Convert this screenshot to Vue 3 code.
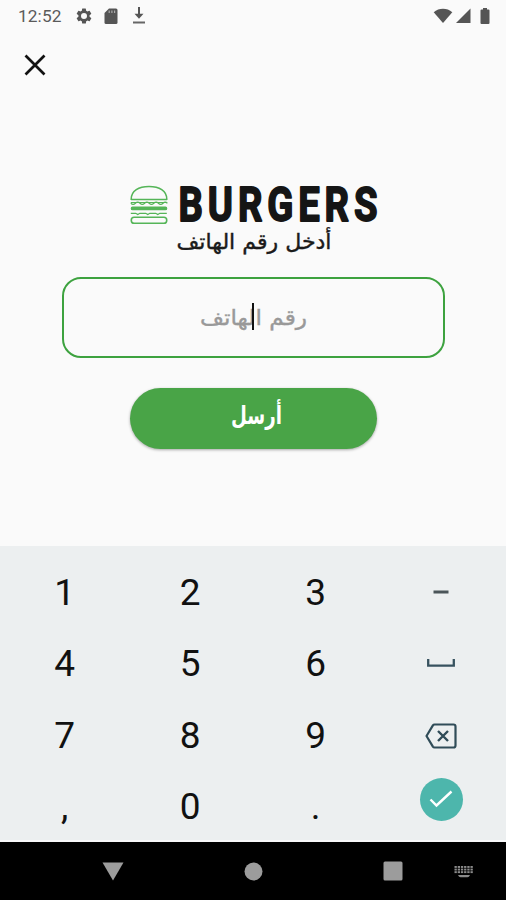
<script setup>
const keys = ['1', '2', '3', 'dash', '4', '5', '6', 'space', '7', '8', '9', 'delete', ',', '0', '.', 'done']
const named = ['dash', 'space', 'delete', 'done']
const keyboardCols = [0, 3.2, 6.4, 9.6, 12.8, 16]
</script>

<template>
  <div class="screen">
    <header class="status">
      <span class="clock">12:52</span>
      <svg class="gear" width="18" height="18" viewBox="0 0 24 24"><path fill="#555" fill-rule="evenodd" d="M19.4 13c.04-.3.06-.65.06-1s-.02-.7-.07-1l2.1-1.65a.5.5 0 0 0 .12-.64l-2-3.46a.5.5 0 0 0-.6-.22l-2.5 1a7.4 7.4 0 0 0-1.69-.98l-.38-2.65A.5.5 0 0 0 14 2h-4a.5.5 0 0 0-.5.42l-.37 2.65c-.61.25-1.17.58-1.69.98l-2.49-1a.5.5 0 0 0-.61.22l-2 3.46a.5.5 0 0 0 .12.64L4.58 11a8 8 0 0 0 0 2l-2.11 1.65a.5.5 0 0 0-.12.64l2 3.46c.12.22.39.3.61.22l2.49-1c.52.4 1.08.73 1.69.98l.37 2.65c.04.24.25.42.5.42h4c.25 0 .46-.18.49-.42l.38-2.65a7.4 7.4 0 0 0 1.69-.98l2.49 1c.23.09.49 0 .61-.22l2-3.46a.5.5 0 0 0-.12-.64zM12 16a4 4 0 1 1 0-8a4 4 0 0 1 0 8z"/></svg>
      <svg class="card" width="14" height="17" viewBox="0 0 14 17"><path fill="#555" d="M5 .5h7a1.500 1.500 0 0 1 1.500 1.500v12.500a1.500 1.500 0 0 1-1.500 1.500H2a1.500 1.500 0 0 1-1.500-1.500V5z"/><path d="M5.200 2.500v2.500M7.900 2.500v2.500M10.600 2.500v2.500" stroke="#aaa" stroke-width="1.200"/></svg>
      <svg class="download" width="14" height="18" viewBox="0 0 14 18"><path d="M7 0v10" fill="none" stroke="#555" stroke-width="2"/><path d="M1 15.500h12" stroke="#666" stroke-width="2"/><path d="M2.500 6.800h9L7 11.800z" fill="#555"/></svg>
      <div class="signals">
        <svg width="20" height="16" viewBox="0 0 20 16"><path fill="#555" d="M.7 4.200C6-.3 14-.3 19.300 4.200L10 15z"/></svg>
        <svg width="15" height="16" viewBox="0 0 15 16"><path fill="#555" d="M14.500.5V15H0z"/></svg>
        <svg class="battery" width="10" height="16" viewBox="0 0 10 16"><path fill="#555" d="M3 0h4v1.600h1.500q1 0 1 1V15q0 1-1 1h-7q-1 0-1-1V2.600q0-1 1-1H3z"/></svg>
      </div>
    </header>

    <div class="toolbar">
      <svg width="22" height="22" viewBox="0 0 22 22"><path d="M1.500 1.500l19 19M20.500 1.500l-19 19" stroke="#111" stroke-width="2.700"/></svg>
    </div>

    <main class="form">
      <div class="brand">
        <svg class="burger" width="38" height="40" viewBox="0 0 38 40" fill="none" stroke="#55b558">
          <path d="M1.200 14.500C1 5.500 9 1.500 19 1.500s18 4 17.800 13z" stroke-width="1.600" stroke-linejoin="round"/>
          <path d="M.8 17.500h36.400" stroke-width="1"/>
          <path d="M.8 18.300q2.300 2.200 4.600 0t4.600 0 4.600 0 4.600 0 4.600 0 4.600 0 4.600 0 4.300 0" stroke-width="1.200"/>
          <rect x="1.500" y="22.300" width="35" height="2.200" rx="1.100" stroke-width="1.600" fill="#55b558"/>
          <path d="M.8 28.300h5l2 1.300 2-1.300h6l2 1.300 2-1.300h6l2 1.300 2-1.300h7" stroke-width="1.200"/>
          <rect x="1.300" y="32.200" width="35.400" height="6" rx="2.800" stroke-width="1.600"/>
        </svg>
        <svg class="wordmark" width="204" height="44" viewBox="0 0 204 44"><text class="name" transform="translate(1.600 38.200) scale(.78 1)" textLength="255" lengthAdjust="spacing">BURGERS</text></svg>
      </div>
      <svg class="subtitle" width="160" height="32" viewBox="0 0 160 32"><text class="arabic" x="81" y="21.500" text-anchor="middle" textLength="155" lengthAdjust="spacingAndGlyphs" font-size="21.500" fill="#1b1b1b" stroke="#1b1b1b" stroke-width=".4">أدخل رقم الهاتف</text></svg>
      <div class="field">
        <svg width="120" height="40" viewBox="0 0 120 40"><text class="arabic" x="59.500" y="27" text-anchor="middle" textLength="107" lengthAdjust="spacingAndGlyphs" font-size="21.500" fill="#999" stroke="#999" stroke-width=".4">رقم الهاتف</text></svg>
        <i class="caret"></i>
      </div>
      <button class="send">
        <svg width="60" height="44" viewBox="0 0 60 44"><text class="arabic bold" x="30.500" y="27" text-anchor="middle" textLength="51" lengthAdjust="spacingAndGlyphs" font-size="25" fill="#fff">أرسل</text></svg>
      </button>
    </main>

    <section class="keypad">
      <div v-for="key in keys" :key="key" class="key">
        <span v-if="!named.includes(key)">{{ key }}</span>
        <svg v-else-if="key === 'dash'" class="dash" width="16" height="4" viewBox="0 0 16 4"><path d="M.5 2h15" stroke="#4b5559" stroke-width="3"/></svg>
        <svg v-else-if="key === 'space'" class="space" width="28" height="8" viewBox="0 0 28 8"><path d="M1.200 0v6.600h25.600V0" fill="none" stroke="#37525f" stroke-width="2.300"/></svg>
        <svg v-else-if="key === 'delete'" width="32" height="26" viewBox="0 0 32 26" fill="none" stroke="#304c58"><path d="M9.500 1.500h19q2 0 2 2v19q0 2-2 2h-19q-1 0-1.600-.9L1.500 13l6.400-10.600q.6-.9 1.600-.9z" stroke-width="2.200" stroke-linejoin="round"/><path d="M13 8l10 10M23 8L13 18" stroke-width="2.400"/></svg>
        <div v-else class="done"><svg width="24" height="18" viewBox="0 0 24 18"><path d="M1.500 9.500l6 6L22.500 1.500" fill="none" stroke="#fff" stroke-width="2.400"/></svg></div>
      </div>
    </section>

    <nav class="navbar">
      <div><svg width="22" height="19" viewBox="0 0 22 19"><path d="M.5.500h21L11 18.500z" fill="#9c9c9c"/></svg></div>
      <div><svg width="19" height="19" viewBox="0 0 19 19"><circle cx="9.500" cy="9.500" r="9" fill="#9c9c9c"/></svg></div>
      <div><svg width="20" height="20" viewBox="0 0 20 20"><rect x=".5" y=".5" width="19" height="19" rx="1.500" fill="#9c9c9c"/></svg></div>
      <svg class="ime" width="20" height="13" viewBox="0 0 20 13" fill="#8b8b8b">
        <g v-for="x in keyboardCols" :key="x"><rect :x="x + .5" y="1" width="2.300" height="1.900"/><rect :x="x + .5" y="3.600" width="2.300" height="1.900"/><rect :x="x + .5" y="6.200" width="2.300" height="1.900"/></g>
        <path d="M4 10h12q-1 2.300-2.500 2.300h-7q-1.500 0-2.500-2.300z"/>
      </svg>
    </nav>
  </div>
</template>

<style>
body { margin: 0; background: #fafafa; }
</style>

<style scoped>
.screen { width: 506px; height: 900px; display: flex; flex-direction: column; background: #fafafa; font-family: Roboto, sans-serif; overflow: hidden; }
svg { display: block; flex: none; overflow: visible; }
.status { height: 32px; display: flex; align-items: center; padding: 0 16px 0 18px; box-sizing: border-box; color: #5a5a5a; }
.clock { font-size: 17.300px; width: 57px; letter-spacing: .1px; }
.card { margin-left: 11px; }
.download { margin-left: 14px; }
.signals { display: flex; gap: 3px; margin-left: auto; }
.battery { margin-left: 6px; }
.toolbar { height: 66px; padding: 22px 24px 0; box-sizing: border-box; }
.form { height: 448px; padding-top: 85px; box-sizing: border-box; display: flex; flex-direction: column; align-items: center; }
.brand { display: flex; align-items: flex-start; width: 248px; height: 46px; gap: 9px; padding-left: 2px; }
.burger { margin-top: 2px; }
.name { font: 700 49px Roboto, sans-serif; fill: #151515; stroke: #151515; stroke-width: 1.800px; stroke-linejoin: round; }
.subtitle { margin-top: -2px; }
.arabic { font-family: "DejaVu Sans", sans-serif; direction: rtl; }
.bold { font-weight: 700; }
.field { width: 383px; height: 81px; margin: 18px 0 0 1px; box-sizing: border-box; border: 2px solid #3da23f; border-radius: 19px; display: grid; place-items: center; }
.field > * { grid-area: 1 / 1; }
.caret { width: 2px; height: 27px; background: #111; margin: 0 2px 3px 0; }
.send { margin-top: 30px; width: 247px; height: 61px; border: 0; padding: 0 0 0 6px; border-radius: 31px; background: #49a447; box-shadow: 0 1px 3px #0005; display: grid; place-items: center; }
.keypad { height: 296px; box-sizing: border-box; padding: 11.500px 2px 0; background: #eceff0; display: grid; grid-template-columns: repeat(4, 125.500px); grid-template-rows: repeat(4, 71.300px); border-bottom: 2px solid #f8f9fa; }
.key { display: grid; place-items: center; font-size: 37px; line-height: 44px; color: #111; }
.dash { margin-top: -2px; }
.space { margin-top: -2px; }
.done { width: 43px; height: 43px; margin-top: -16px; border-radius: 50%; background: #4db6ac; display: grid; place-items: center; }
.navbar { flex: 1; background: #000; display: grid; grid-template-columns: repeat(3, 140px) 43px; padding: 0 0 0 43px; align-items: center; justify-items: center; }
.ime { justify-self: start; margin-left: -9px; }
</style>
